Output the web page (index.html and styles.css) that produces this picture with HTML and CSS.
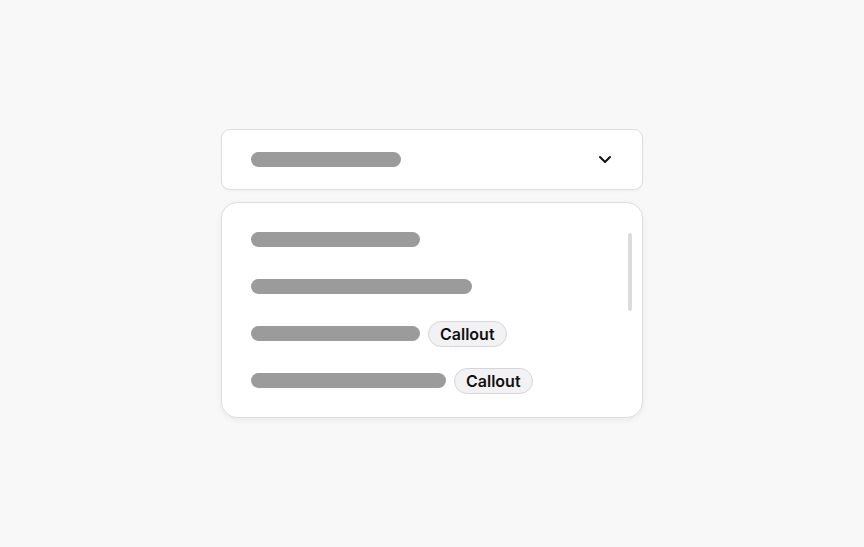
FILE: index.html
```html
<!DOCTYPE html>
<html lang="en">
<head>
    <meta charset="UTF-8">
    <meta name="viewport" content="width=device-width, initial-scale=1.0">
    <title>Select</title>
    <link rel="stylesheet" href="styles.css">
</head>
<body>
    <div class="select">
        <div class="select-trigger">
            <span class="bar" style="width: 150px"></span>
            <svg class="chevron" width="14" height="9" viewBox="0 0 14 9" fill="none">
                <path d="M2 2 L7 7 L12 2" stroke="#111" stroke-width="2" stroke-linecap="round" stroke-linejoin="round"/>
            </svg>
        </div>
        <div class="select-menu">
            <div class="option"><span class="bar" style="width: 169px"></span></div>
            <div class="option"><span class="bar" style="width: 221px"></span></div>
            <div class="option"><span class="bar" style="width: 169px"></span><span class="callout">Callout</span></div>
            <div class="option"><span class="bar" style="width: 195px"></span><span class="callout">Callout</span></div>
            <div class="scrollbar"></div>
        </div>
    </div>
</body>
</html>
```

FILE: styles.css
```css
body {
    margin: 0;
    height: 100vh;
    display: flex;
    align-items: center;
    justify-content: center;
    background-color: #f8f8f8;
    font-family: Inter, 'Noto Sans', sans-serif;
}

.select {
    width: 422px;
    display: flex;
    flex-direction: column;
    gap: 12px;
}

.select-trigger {
    box-sizing: border-box;
    height: 61px;
    display: flex;
    align-items: center;
    justify-content: space-between;
    padding: 0 30px 0 29px;
    background-color: white;
    border: 1px solid #dedede;
    border-radius: 9px;
    box-shadow: 0 1px 3px rgba(0,0,0,0.04);
}

.bar {
    display: block;
    height: 15px;
    border-radius: 8px;
    background-color: #9b9b9b;
}

.select-menu {
    position: relative;
    box-sizing: border-box;
    padding: 13px 29px;
    background-color: white;
    border: 1px solid #dedede;
    border-radius: 16px;
    box-shadow: 0 2px 6px rgba(0,0,0,0.06);
}

.option {
    height: 47px;
    display: flex;
    align-items: center;
    gap: 8px;
}

.callout {
    box-sizing: border-box;
    height: 26px;
    padding: 0 11px;
    display: flex;
    align-items: center;
    font-size: 16px;
    font-weight: 600;
    color: #111;
    background-color: #f2f2f4;
    border: 1px solid #d6d6da;
    border-radius: 13px;
}

.scrollbar {
    position: absolute;
    top: 30px;
    right: 10px;
    width: 4px;
    height: 78px;
    border-radius: 2px;
    background-color: #dcdcdc;
}
```
